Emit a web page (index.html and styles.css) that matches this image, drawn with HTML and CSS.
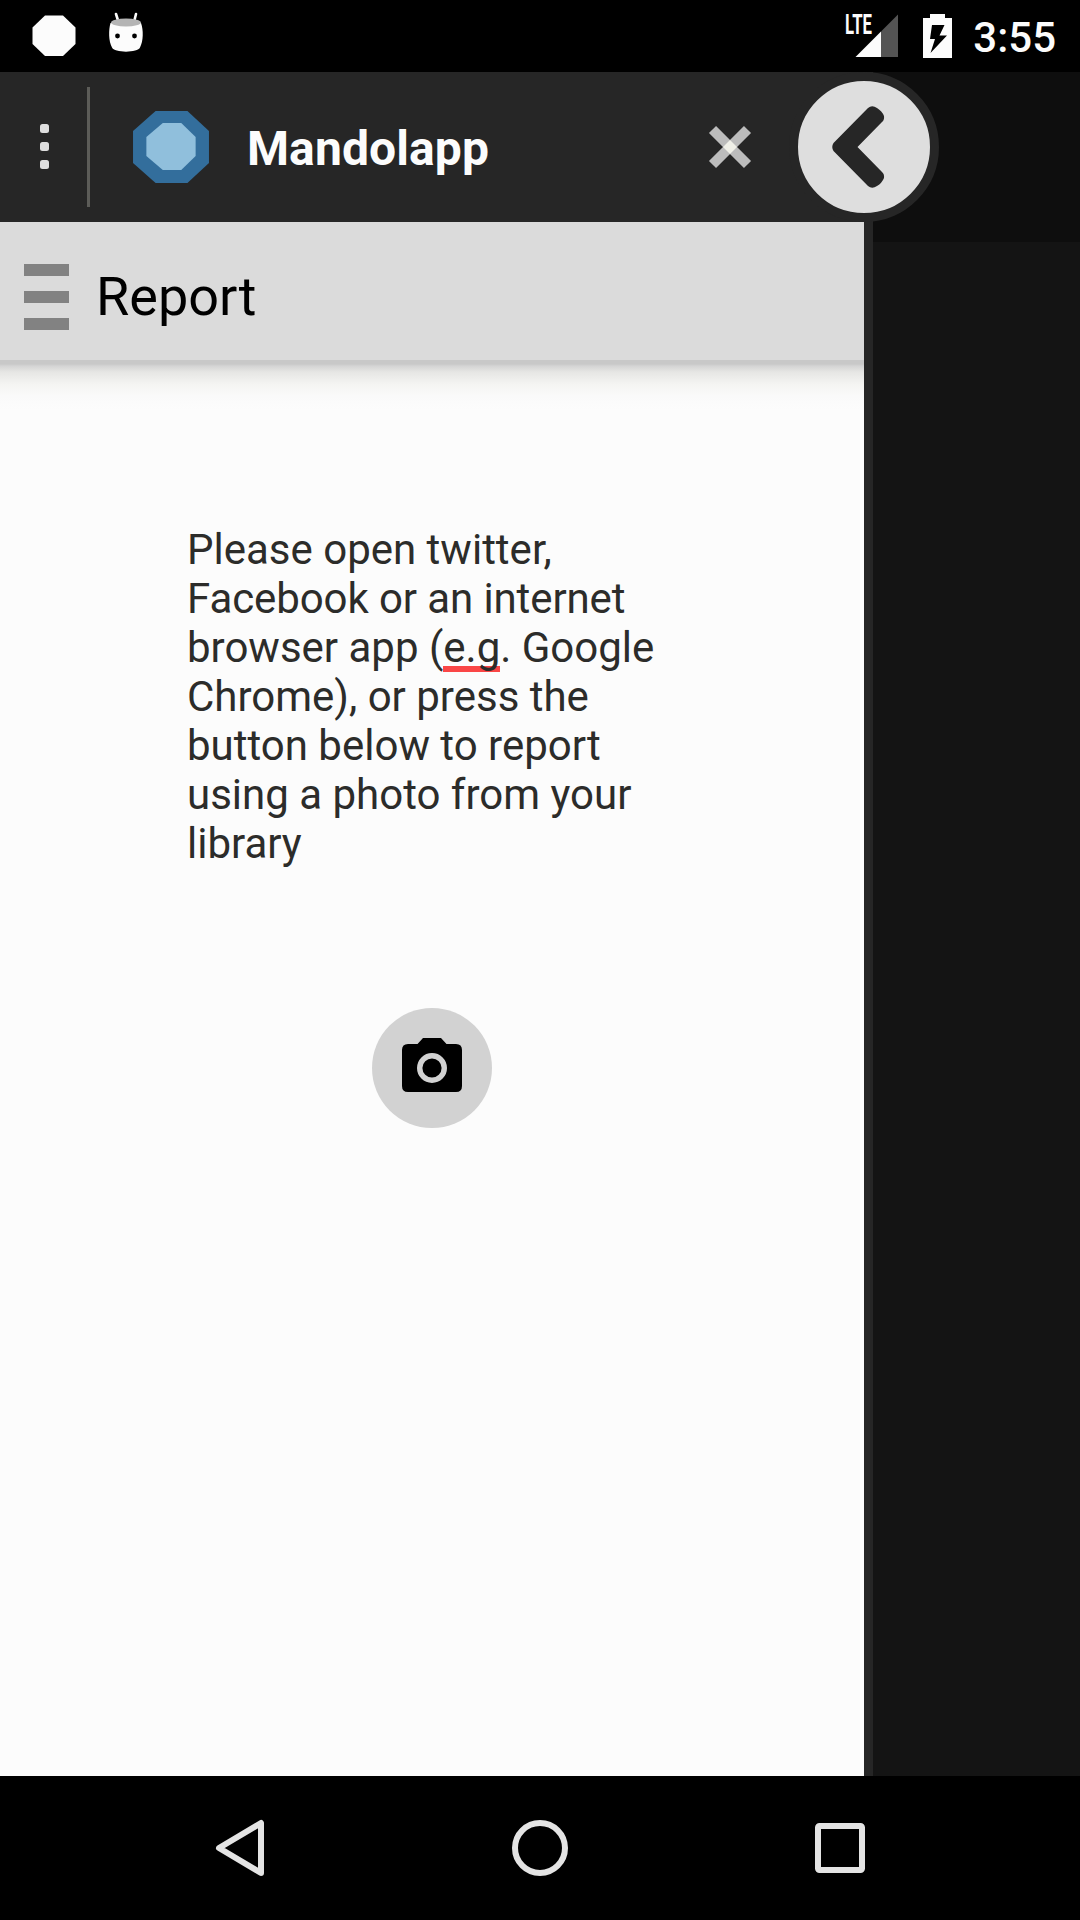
FILE: index.html
```html
<!DOCTYPE html>
<html lang="en">
<head>
<meta charset="utf-8">
<title>Mandolapp</title>
<link rel="stylesheet" href="styles.css">
</head>
<body>
<div class="screen">
  <header class="status-bar">
    <div class="notifications">
      <svg class="octagon" width="44" height="42" viewBox="0 0 44 42"><path d="M13 0.5H31L43.5 12.5V29L31 41H13L0.500 29V12.5Z" fill="#fcfcfc"/></svg>
      <svg width="36" height="42" viewBox="0 0 36 42">
        <path d="M8 2L10.500 10M28 2L26 10" stroke="#fcfcfc" stroke-width="2.600" stroke-linecap="round"/>
        <path d="M2.500 11C.5 18 .5 29 4 35.500C6 41 30 41 32 35.500C35.500 29 35.500 18 33 11Z" fill="#fcfcfc"/>
        <ellipse cx="18" cy="10.500" rx="15" ry="4" fill="#b4b4b4"/>
        <circle cx="9.500" cy="24" r="2.400"/><circle cx="26.500" cy="24" r="2.400"/>
      </svg>
    </div>
    <div class="system">
      <svg width="54" height="44" viewBox="0 0 54 44">
        <text class="lte" x="0" y="20" textLength="27" lengthAdjust="spacingAndGlyphs">LTE</text>
        <path d="M10.500 43L36 17.500V43Z" fill="#fcfcfc"/>
        <path d="M36 17.500L53 .5V43H36Z" fill="#545454"/>
      </svg>
      <svg class="battery" width="29" height="44" viewBox="0 0 29 44">
        <path d="M7 0H22V4H29V44H0V4H7Z" fill="#fcfcfc"/>
        <path d="M9 11H21.500L16.500 21.500H24L7.500 39L12 25H7Z"/>
      </svg>
      <span class="clock">3:55</span>
    </div>
  </header>

  <main class="stage">
    <section class="panel">
      <div class="title-bar">
        <svg class="more" width="9" height="46" viewBox="0 0 9 46" fill="#dedede"><rect width="9" height="9" rx="2.500"/><rect y="18" width="9" height="9" rx="2.500"/><rect y="36" width="9" height="9" rx="2.500"/></svg>
        <div class="divider"></div>
        <svg class="logo" width="78" height="74" viewBox="0 0 76 74" preserveAspectRatio="none">
          <path d="M23 1H54L75 21V53L54 73H23L1 53V21Z" fill="#336e9c"/>
          <path d="M30 13H48L62 27V46L48 60H30L14 46V27Z" fill="#90bfdc"/>
        </svg>
        <h1 class="app-name">Mandolapp</h1>
        <svg class="close" width="44" height="44" viewBox="0 0 44 44">
          <path d="M4.500 4.500L39.500 39.500M39.500 4.500L4.500 39.500" stroke="#bcbcbc" stroke-width="10"/>
          <path d="M22 15L29 22L22 29L15 22Z" fill="#f0f0e8"/>
        </svg>
      </div>
      <div class="toolbar">
        <svg width="45" height="66" viewBox="0 0 45 66" fill="#828282"><path d="M0 0H45V12H0ZM0 27H45V39H0ZM0 54H45V66H0Z"/></svg>
        <h2 class="page-title">Report</h2>
      </div>
      <div class="content">
        <p class="message">Please open twitter,<br><span class="tight">Facebook or an internet</span><br>browser app (<span class="misspelt">e.g</span>. Google<br>Chrome), or press the<br>button below to report<br>using a photo from your<br>library</p>
        <button class="photo-button" aria-label="Choose photo">
          <svg width="60" height="54" viewBox="0 0 60 54">
            <path d="M21 0H39L44.500 6H54Q60 6 60 12V48Q60 54 54 54H6Q0 54 0 48V12Q0 6 6 6H15.500Z"/>
            <circle cx="30" cy="30" r="12.300" fill="none" stroke="#d2d2d2" stroke-width="5.400"/>
          </svg>
        </button>
      </div>
    </section>
    <button class="collapse" aria-label="Collapse">
      <svg width="52" height="82" viewBox="0 0 52 82"><path d="M1.500 37L36 2Q40-1.500 45 2Q50 5 52 10Q52.500 14 50 16L25.500 41L50 66Q52.500 68 52 72Q50 77 45 80Q40 83.500 36 80L1.500 45Q-1 41 1.500 37Z" fill="#262626"/></svg>
    </button>
  </main>

  <nav class="nav-bar">
    <svg width="48" height="56" viewBox="0 0 48 56"><path d="M45 3V53L3 28Z"/></svg>
    <svg width="56" height="56" viewBox="0 0 56 56"><circle cx="28" cy="28" r="25"/></svg>
    <svg width="50" height="50" viewBox="0 0 50 50"><rect x="3" y="3" width="44" height="44" rx="1.500"/></svg>
  </nav>
</div>
</body>
</html>
```
FILE: styles.css
```css
* { box-sizing: border-box; }
body { margin: 0; background: #000; font-family: Roboto, sans-serif; }
svg { display: block; flex: none; overflow: visible; }
h1, h2, p { margin: 0; }
button { border: 0; padding: 0; }

.screen { width: 1080px; height: 1920px; display: flex; flex-direction: column; overflow: hidden; }

.status-bar { height: 72px; display: flex; justify-content: space-between; background: #000; }
.notifications { display: flex; align-items: flex-start; gap: 32px; padding: 12px 0 0 32px; }
.octagon { margin-top: 3px; }
.system { display: flex; align-items: flex-start; padding: 14px 24px 0 0; }
.lte { font: bold 27px "Roboto", sans-serif; fill: #fcfcfc; }
.battery { margin-left: 24px; }
.clock { margin-left: 21px; font-size: 42px; font-weight: 500; line-height: 48px; color: #fcfcfc; }

.stage { position: relative; height: 1704px; background: linear-gradient(#0e0e0e 0 170px, #141414 170px); }
.panel { width: 873px; height: 100%; display: flex; flex-direction: column; background: #262626; }
.title-bar { width: 864px; height: 150px; display: flex; align-items: center; padding-left: 40px; background: #262626; }
.divider { width: 3px; height: 120px; margin-left: 38px; background: #5c5c58; }
.logo { margin-left: 42px; }
.app-name { width: 460px; margin-left: 37px; padding-top: 3px; color: #fcfcfc; font-size: 48px; font-weight: 700; line-height: 56px; letter-spacing: .1px; }
.close { margin-left: 1px; }

.toolbar { width: 864px; height: 144px; display: flex; align-items: center; gap: 27px; padding: 6px 0 0 24px; background: linear-gradient(#dbdbdb 0 138px, #c8c8c8 138px 142px, #d4d4d4 144px); }
.page-title { font-size: 54px; font-weight: 400; line-height: 64px; color: #000; }
.content { width: 864px; flex: 1; display: flex; flex-direction: column; align-items: center; padding-top: 159px; background: linear-gradient(#d4d4d4, #e6e6e4 6px, #f4f4f2 18px, #fafafa 30px, #fcfcfc 44px); }
.message { width: 490px; color: #2c2c2a; font-size: 42px; line-height: 49px; white-space: nowrap; }
.tight { letter-spacing: -.1px; }
.misspelt { background: linear-gradient(#fa4646, #fa4646) 0 100% / 100% 6px no-repeat; }
.photo-button { width: 120px; height: 120px; display: grid; place-items: center; margin-top: 140px; padding-bottom: 6px; border-radius: 50%; background: #d2d2d2; }

.collapse { position: absolute; z-index: 2; left: 789px; top: 0; width: 150px; height: 150px; display: grid; place-items: center; padding-right: 12px; border: 9px solid #262626; border-radius: 50%; background: #dedede; }

.nav-bar { height: 144px; display: flex; align-items: center; justify-content: space-between; padding: 0 215px 0 216px; background: #000; }
.nav-bar svg { fill: none; stroke: #e4e4e4; stroke-width: 6; stroke-linejoin: round; }
```
